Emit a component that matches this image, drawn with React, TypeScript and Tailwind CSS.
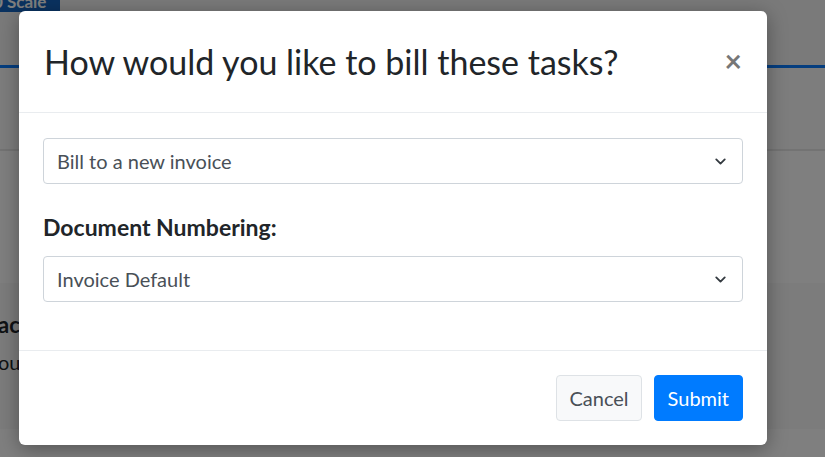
import { ChevronDown } from "lucide-react";

const font = { fontFamily: '"Source Sans Pro", Lato, "Noto Sans", sans-serif' };

function FakeSelect({ value }: { value: string }) {
  return (
    <div className="flex h-[46px] items-center justify-between rounded-[4px] border border-[#ced4da] bg-white pl-[13px] pr-[13px] text-[20px] text-[#495057]">
      <span>{value}</span>
      <ChevronDown size={17} strokeWidth={2.6} className="text-[#343a40]" />
    </div>
  );
}

export default function App() {
  return (
    <div className="relative h-[457px] w-[825px] overflow-hidden bg-white" style={font}>
      {/* page behind the modal */}
      <div className="h-[65px] bg-[#f4f4f4]">
        <div className="h-[12px] w-[60px] overflow-hidden bg-[#1565c0]">
          <p className="-mt-[9px] -ml-[7px] text-[17px] font-bold leading-[22px] text-white">0 Scale</p>
        </div>
      </div>
      <div className="h-[3px] bg-[#0b7cff]" />
      <div className="h-[83px] border-b-2 border-[#e6e6e6] bg-[#fbfbfb]" />
      <div className="h-[132px] bg-white" />
      <div className="h-[146px] bg-[#f8f8f8] pt-[25px]">
        <p className="-ml-[2px] text-[22px] font-bold text-[#212529]">acked</p>
        <p className="-ml-[2px] mt-[6px] text-[20px] text-[#212529]">ours</p>
      </div>
      <div className="h-[2px] bg-[#ffffff]" />

      {/* overlay + modal */}
      <div className="absolute inset-0 bg-black/50 pl-[19px] pt-[11px]">
        <div className="w-[748px] rounded-[6px] bg-white shadow-[0_4px_20px_rgba(0,0,0,0.35)]">
          <div className="flex h-[102px] items-start justify-between border-b border-[#e9ecef] pl-[25px] pr-[25px] pt-[31px]">
            <h1 className="text-[34px] leading-[40px] text-[#212529]">How would you like to bill these tasks?</h1>
            <span className="mt-[-2px] text-[30px] font-bold leading-[40px] text-[#777]">×</span>
          </div>
          <div className="h-[238px] border-b border-[#e9ecef] px-[24px] pt-[25px]">
            <FakeSelect value="Bill to a new invoice" />
            <p className="mt-[28px] text-[23px] font-bold leading-[30px] text-[#212529]">Document Numbering:</p>
            <div className="mt-[14px]">
              <FakeSelect value="Invoice Default" />
            </div>
          </div>
          <div className="flex h-[94px] items-center justify-end gap-[12px] px-[24px]">
            <button className="h-[46px] rounded-[4px] border border-[#dee2e6] bg-[#f8f9fa] px-[12px] text-[20px] text-[#495057]">
              Cancel
            </button>
            <button className="h-[46px] rounded-[4px] border border-[#007bff] bg-[#007bff] px-[13px] text-[20px] text-white">
              Submit
            </button>
          </div>
        </div>
      </div>
    </div>
  );
}
